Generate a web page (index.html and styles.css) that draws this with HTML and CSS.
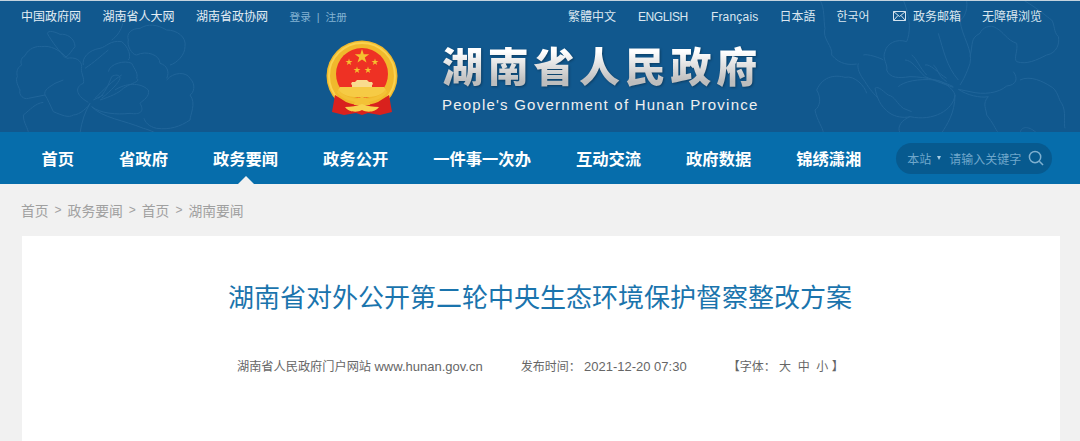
FILE: index.html
```html
<!DOCTYPE html>
<html lang="zh-CN">
<head>
  <meta charset="UTF-8">
  <title>湖南省人民政府</title>
  <link rel="stylesheet" href="styles.css">
</head>
<body>
  <header class="header">
    <!-- peony outlines behind the header -->
    <svg class="peony peony-left" viewBox="0 0 630 354" fill="none" stroke="#20659a" stroke-width="3">
      <path d="M200 128C180 105 150 90 125 95C110 92 85 100 75 122C60 130 62 145 65 150C48 160 50 175 52 185C45 195 55 215 60 225C55 240 72 255 85 250L135 240"/>
      <path d="M142 55C145 45 165 50 180 58C200 55 225 70 225 95C215 105 210 120 195 128C180 110 155 80 142 55Z"/>
      <path d="M200 130C225 125 245 135 245 155C240 170 255 190 250 205C225 215 225 240 265 262"/>
      <path d="M135 240C130 225 150 215 165 205L190 195M135 240C145 255 150 270 160 290C185 300 205 310 220 300C240 300 265 275 270 265"/>
      <path d="M130 262C105 265 90 285 70 300C70 325 85 340 85 354"/>
      <path d="M250 150C245 130 265 105 300 100C320 95 330 75 365 80C385 95 395 125 385 135M255 160C285 140 300 125 325 105M335 75C350 65 365 45 368 25"/>
      <path d="M385 75C378 55 395 40 420 40C445 25 470 28 500 45C530 45 560 65 555 95C555 120 530 145 510 150M385 75C380 90 395 120 410 120C440 105 480 120 480 145C500 150 510 170 500 190"/>
      <path d="M325 170C330 145 375 135 395 145C405 165 415 175 410 190C425 200 390 205 370 220C355 235 330 245 300 255"/>
      <path d="M500 195C520 170 560 170 570 190C590 210 580 235 570 240C590 265 570 300 570 315C540 335 510 345 470 340C445 335 435 320 432 310"/>
      <path d="M345 225C375 205 420 200 445 225C450 245 430 255 420 265C435 290 420 300 390 295C350 300 300 295 275 275C310 310 370 315 430 340C450 345 465 354 470 354"/>
      <path d="M285 250C310 225 340 195 365 180M295 250C315 235 325 210 335 185C345 178 360 178 360 190C355 205 335 225 305 250M280 255L310 240M270 265C255 290 245 320 240 354"/>
    </svg>
    <svg class="peony peony-right" viewBox="0 0 810 399" fill="none" stroke="#20659a" stroke-width="3">
      <path d="M30 0C45 25 40 60 45 85C35 115 70 140 65 165C90 195 120 195 140 192M160 165C170 160 215 175 220 180M145 190C140 205 150 225 165 245C180 270 195 285 205 295"/>
      <path d="M225 155C215 175 235 195 230 210C240 235 265 235 300 230C350 230 400 245 430 260M225 155C230 130 260 115 290 125C300 100 305 60 280 0"/>
      <path d="M265 260C280 245 325 235 375 240C395 240 430 265 435 285C430 330 370 365 300 350C275 360 260 380 270 399M435 285C435 340 410 375 395 399"/>
      <path d="M195 265C205 255 225 280 235 285C255 290 260 310 280 325L305 335M195 265C200 290 210 320 240 340C255 350 280 355 300 350"/>
      <path d="M20 270C40 225 80 225 105 232C135 225 165 260 170 280M20 270C35 295 30 320 15 330C20 360 40 385 40 399"/>
      <path d="M285 180C305 180 320 205 345 230C370 240 395 250 430 262M305 165C320 175 330 205 350 225M345 195C360 190 385 220 410 235M370 195C385 205 380 225 410 245"/>
      <path d="M470 0C475 40 455 60 450 60C455 110 490 150 480 190C470 220 460 240 450 255M385 100C400 150 410 200 445 240"/>
      <path d="M480 170C490 130 480 115 510 100C515 85 540 70 560 85C580 95 590 120 620 130C625 150 610 175 620 185C650 195 680 180 710 165C740 160 750 130 745 110C730 95 735 75 725 60C710 50 690 30 640 0"/>
      <path d="M610 215C625 235 620 255 590 258C565 280 520 285 480 275L445 268C470 285 510 295 535 290C515 310 530 330 530 345C550 370 555 385 565 399"/>
      <path d="M630 240C660 225 700 245 720 258C745 270 745 300 755 310C770 335 760 370 765 385M630 399C635 375 660 380 680 399"/>
    </svg>

    <div class="topbar">
      <div class="links-left">
        <a>中国政府网</a>
        <a>湖南省人大网</a>
        <a>湖南省政协网</a>
        <span class="login">登录 &nbsp;|&nbsp; 注册</span>
      </div>
      <div class="links-right">
        <a>繁體中文</a>
        <a class="english">ENGLISH</a>
        <a class="french">Français</a>
        <a>日本語</a>
        <a>한국어</a>
        <a class="mail">
          <svg width="13" height="10" viewBox="0 0 13 10" fill="none" stroke="#d5e3ee" stroke-width="1">
            <path d="M.5.5h12v9H.5zM.5.5l6 5 6-5M.5 9.500l4.500-5M12.500 9.500l-4.500-5"/>
          </svg>
          政务邮箱
        </a>
        <a>无障碍浏览</a>
      </div>
    </div>

    <div class="brand">
      <svg class="emblem" width="72" height="76" viewBox="0 0 72 76">
        <circle cx="36" cy="36" r="35.500" fill="#f0b92c"/>
        <circle cx="36" cy="36" r="33" fill="none" stroke="#fad24f" stroke-width="2"/>
        <circle cx="36" cy="34" r="26" fill="#ee3124"/>
        <path d="M36 9l1.700 5.200h5.500l-4.400 3.200 1.700 5.200-4.500-3.200-4.500 3.200 1.700-5.200-4.400-3.200h5.500z" fill="#f5c12f"/>
        <path d="M23 18.500l.8 2.500h2.700l-2.200 1.500.9 2.500-2.200-1.500-2.200 1.500.9-2.500-2.200-1.500h2.700zM49 18.500l.8 2.500h2.700l-2.200 1.500.9 2.500-2.200-1.500-2.200 1.500.9-2.500-2.200-1.500h2.700zM31 26.500l.8 2.500h2.700l-2.200 1.500.9 2.500-2.200-1.500-2.200 1.500.9-2.500-2.200-1.500h2.700zM42 26.500l.8 2.500h2.700l-2.200 1.500.9 2.500-2.200-1.500-2.200 1.500.9-2.500-2.200-1.500h2.700z" fill="#f5c12f"/>
        <path d="M31 40h10l2 2h3l1 2-1 1v2H26v-2l-1-1 1-2h3z" fill="#f9dc8f"/>
        <path d="M14 47h44l3 5-5 5H16l-5-5z" fill="#f6cb45"/>
        <path d="M10 53C16 64 56 64 62 53L60 50C54 60 18 60 12 50z" fill="#f0b92c"/>
        <path d="M9 55L20 62C28 66 44 66 52 62L63 55L66 72L54 75L42 73L36 75L30 73L18 75L6 72Z" fill="#d9211d"/>
        <path d="M12 51C20 64 52 64 60 51" fill="none" stroke="#f3c136" stroke-width="3"/>
        <path d="M28 65c0-3 2-4 3-5 1-3 2-3 3-2 1-2 3-2 4 0 1-1 2-1 3 2 1 1 3 2 3 5z" fill="#f3c136"/>
        <path d="M19 67c6 0 12-1 17-3 5 2 11 3 17 3-3 5-12 6-17 3-5 3-14 2-17-3z" fill="#f8d24e"/>
      </svg>
      <div class="brand-text">
        <h1>湖南省人民政府</h1>
        <p>People's Government of Hunan Province</p>
      </div>
    </div>
  </header>

  <nav class="nav">
    <a>首页</a>
    <a>省政府</a>
    <a class="active">政务要闻</a>
    <a>政务公开</a>
    <a>一件事一次办</a>
    <a>互动交流</a>
    <a>政府数据</a>
    <a>锦绣潇湘</a>
    <div class="search">
      <span class="scope">本站</span>
      <span class="caret"></span>
      <span class="placeholder">请输入关键字</span>
      <svg width="16" height="16" viewBox="0 0 17 17" fill="none" stroke="#7fb0d0" stroke-width="1.600">
        <circle cx="7.500" cy="7.500" r="6"/>
        <path d="M12 12l4 4"/>
      </svg>
    </div>
  </nav>

  <main class="main">
    <div class="crumbs">
      <a>首页</a><span>&gt;</span><a>政务要闻</a><span>&gt;</span><a>首页</a><span>&gt;</span><a>湖南要闻</a>
    </div>
    <article class="article">
      <h2>湖南省对外公开第二轮中央生态环境保护督察整改方案</h2>
      <div class="meta">
        <span class="source">湖南省人民政府门户网站 <b>www.hunan.gov.cn</b></span>
        <span class="time">发布时间： <b>2021-12-20 07:30</b></span>
        <span class="size">【字体： 大&nbsp; 中&nbsp; 小 】</span>
      </div>
    </article>
  </main>
</body>
</html>
```

FILE: styles.css
```css
* {
  box-sizing: border-box;
}

html, body {
  height: 441px;
  overflow: hidden;
}

body {
  margin: 0;
  background-color: #f1f1f1;
  font-family: "Liberation Sans", "Noto Sans CJK SC", sans-serif;
}

h1, h2, p {
  margin: 0;
  font-weight: normal;
}

/* Header */
.header {
  position: relative;
  height: 132px;
  background-color: #11588e;
  border-top: 1px solid #c4d3de;
  overflow: hidden;
}

.peony {
  position: absolute;
}

.peony-left {
  left: 0;
  top: 14px;
  width: 210px;
  height: 118px;
}

.peony-right {
  left: 810px;
  top: -1px;
  width: 270px;
  height: 133px;
}

.topbar {
  position: relative;
  display: flex;
  justify-content: space-between;
  padding: 8px 38px 0 21px;
  font-size: 12px;
  line-height: 17px;
}

.links-left, .links-right {
  display: flex;
}

.links-left a {
  margin-right: 21.500px;
  color: #e4eef5;
}

.login {
  font-size: 10.700px;
  color: #83b3d3;
}

.links-right a {
  margin-left: 21px;
  color: #dbe7f0;
}

.links-right .english {
  margin-left: 22px;
  letter-spacing: -.4px;
}

.links-right .french {
  margin-left: 23px;
  letter-spacing: .2px;
}

.links-right .mail {
  margin-left: 23px;
}

.mail svg {
  margin-right: 4px;
}

.brand {
  position: relative;
  display: flex;
  padding: 14px 0 0 326px;
}

.emblem {
  flex: none;
}

.brand-text {
  margin-left: 44px;
}

.brand-text h1 {
  margin-top: -1px;
  font-family: "Noto Sans CJK SC", sans-serif;
  font-size: 41px;
  font-weight: 900;
  line-height: 50px;
  letter-spacing: 4.700px;
  background: linear-gradient(#ffffff 25%, #bdbdbd 85%);
  -webkit-background-clip: text;
  background-clip: text;
  color: transparent;
  white-space: nowrap;
  filter: drop-shadow(1px 1px 1px rgba(0, 0, 0, .3));
}

.brand-text p {
  margin-top: 7px;
  font-size: 15px;
  line-height: 18px;
  letter-spacing: 1.220px;
  color: #f0f0f0;
  white-space: nowrap;
}

/* Nav */
.nav {
  display: flex;
  align-items: center;
  height: 52px;
  padding-left: 41.500px;
  background-color: #066dab;
}

.nav a {
  position: relative;
  height: 52px;
  margin-right: 45px;
  font-size: 16.300px;
  font-weight: 700;
  line-height: 54px;
  color: #fff;
  white-space: nowrap;
}

.nav a.active::after {
  content: "";
  position: absolute;
  left: 50%;
  bottom: 0;
  margin-left: -8px;
  border: 8px solid transparent;
  border-top: 0;
  border-bottom-color: #f1f1f1;
}

.search {
  display: flex;
  align-items: center;
  width: 155.500px;
  height: 31px;
  margin-left: -10px;
  padding-left: 11px;
  border-radius: 16px;
  background-color: #075a8f;
  font-size: 12px;
  color: #6fa7cb;
}

.caret {
  margin: 0 8px 0 6px;
  border: 2.500px solid transparent;
  border-top: 4px solid #a9cde4;
  border-bottom: 0;
}

.search svg {
  margin-left: 7px;
}

/* Content */
.main {
  padding: 0 20px 0 22px;
}

.crumbs {
  display: flex;
  height: 52px;
  align-items: center;
  margin-left: -1px;
  font-size: 13.800px;
  color: #a0a0a0;
}

.crumbs span {
  margin: 0 6px;
  font-size: 12px;
}

.article {
  height: 205px;
  padding-top: 44px;
  background-color: #fff;
}

.article h2 {
  padding-right: 2px;
  font-size: 26px;
  line-height: 36px;
  text-align: center;
  color: #1a74ad;
}

.meta {
  display: flex;
  margin-top: 42px;
  padding-left: 215px;
  font-size: 12px;
  line-height: 18px;
  color: #666;
  white-space: nowrap;
}

.meta b {
  font-size: 13px;
  font-weight: normal;
}

.source {
  font-size: 12.200px;
}

.time {
  margin-left: 38px;
}

.size {
  margin-left: 41px;
}
```
